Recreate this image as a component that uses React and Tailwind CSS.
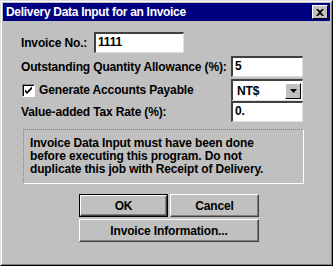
import React from 'react';

const font = { fontFamily: '"Liberation Sans", Arial, sans-serif' };

function Field({ value, className = '' }) {
  return (
    <div className={`h-[21px] bg-white border-t-2 border-l-2 border-t-[#404040] border-l-[#404040] border-b border-r border-b-[#dfdfdf] border-r-[#dfdfdf] px-[2px] text-[12px] font-bold leading-[17px] text-black ${className}`}>
      {value}
    </div>
  );
}

function Button({ children, def, className = '' }) {
  return (
    <button className={`h-[23px] bg-[#c0c0c0] text-[12px] font-bold text-black ${def ? 'border border-black' : ''} ${className}`}>
      <div className="h-full border-t border-l border-white border-r border-b border-r-[#404040] border-b-[#404040] shadow-[inset_-1px_-1px_0_#808080] flex items-center justify-center">
        {children}
      </div>
    </button>
  );
}

export default function App() {
  return (
    <div style={font} className="w-[333px] h-[266px] bg-[#c0c0c0] border-t border-l border-[#dfdfdf] border-r border-b border-r-black border-b-black">
      <div className="h-full border-t border-l border-white border-r border-b border-r-[#808080] border-b-[#808080] p-[1px] flex flex-col">
        {/* Title bar */}
        <div className="h-[18px] bg-[#000080] flex items-center justify-between pl-[3px] pr-[2px]">
          <span className="text-white text-[12px] font-bold leading-none tracking-[-0.3px] whitespace-nowrap">Delivery Data Input for an Invoice</span>
          <div className="w-[16px] h-[14px] bg-[#c0c0c0] border-t border-l border-white border-r border-b border-r-black border-b-black flex items-center justify-center">
            <svg width="8" height="7" viewBox="0 0 8 7">
              <path d="M0 0h2l2 2 2-2h2L5 3.5 8 7H6L4 5 2 7H0l3-3.5z" fill="black" />
            </svg>
          </div>
        </div>

        {/* Body */}
        <div className="flex flex-col pl-[18px] pr-[27px] pt-[11px] text-[12px] font-bold text-black tracking-[-0.15px] whitespace-nowrap">
          <div className="flex items-center h-[21px]">
            <span className="w-[73px]">Invoice No.:</span>
            <Field value="1111" className="w-[90px]" />
          </div>
          <div className="flex items-center justify-between h-[21px] mt-[3px]">
            <span>Outstanding Quantity Allowance (%):</span>
            <Field value="5" className="w-[72px]" />
          </div>
          <div className="flex items-center justify-between h-[22px] mt-[2px]">
            <div className="flex items-center gap-[4px] pl-[1px]">
              <div className="w-[13px] h-[13px] bg-white border-t border-l border-[#808080] border-r border-b border-r-white border-b-white shadow-[inset_1px_1px_0_#000] flex items-center justify-center">
                <svg width="9" height="9" viewBox="0 0 9 9">
                  <path d="M1 3.5l2 2 5-5v2.5L3 8 1 6z" fill="black" />
                </svg>
              </div>
              <span>Generate Accounts Payable</span>
            </div>
            <div className="w-[72px] h-[22px] bg-white border-t-2 border-l-2 border-t-[#404040] border-l-[#404040] border-b border-r border-b-[#dfdfdf] border-r-[#dfdfdf] flex items-center justify-between pl-[4px] pr-[1px]">
              <span>NT$</span>
              <div className="w-[16px] h-[16px] bg-[#c0c0c0] border-t border-l border-white border-r border-b border-r-black border-b-black flex items-center justify-center">
                <svg width="7" height="4" viewBox="0 0 7 4">
                  <path d="M0 0h7L3.5 4z" fill="black" />
                </svg>
              </div>
            </div>
          </div>
          <div className="flex items-center justify-between h-[21px]">
            <span>Value-added Tax Rate (%):</span>
            <Field value="0." className="w-[72px]" />
          </div>

          {/* Message */}
          <div className="mt-[7px] ml-[2px] w-[281px] h-[55px] border border-t-[#808080] border-l-[#808080] border-r-white border-b-white [border-style:dotted_solid_solid_dotted] px-[6px] pt-[7px] leading-[13px]">
            Invoice Data Input must have been done
            <br />
            before executing this program. Do not
            <br />
            duplicate this job with Receipt of Delivery.
          </div>

          {/* Buttons */}
          <div className="ml-[58px] mt-[10px] w-[180px] flex flex-col gap-[2px]">
            <div className="flex gap-[2px]">
              <Button def className="w-[89px]">OK</Button>
              <Button className="w-[89px]">Cancel</Button>
            </div>
            <Button className="w-[180px]">Invoice Information...</Button>
          </div>
        </div>
      </div>
    </div>
  );
}
